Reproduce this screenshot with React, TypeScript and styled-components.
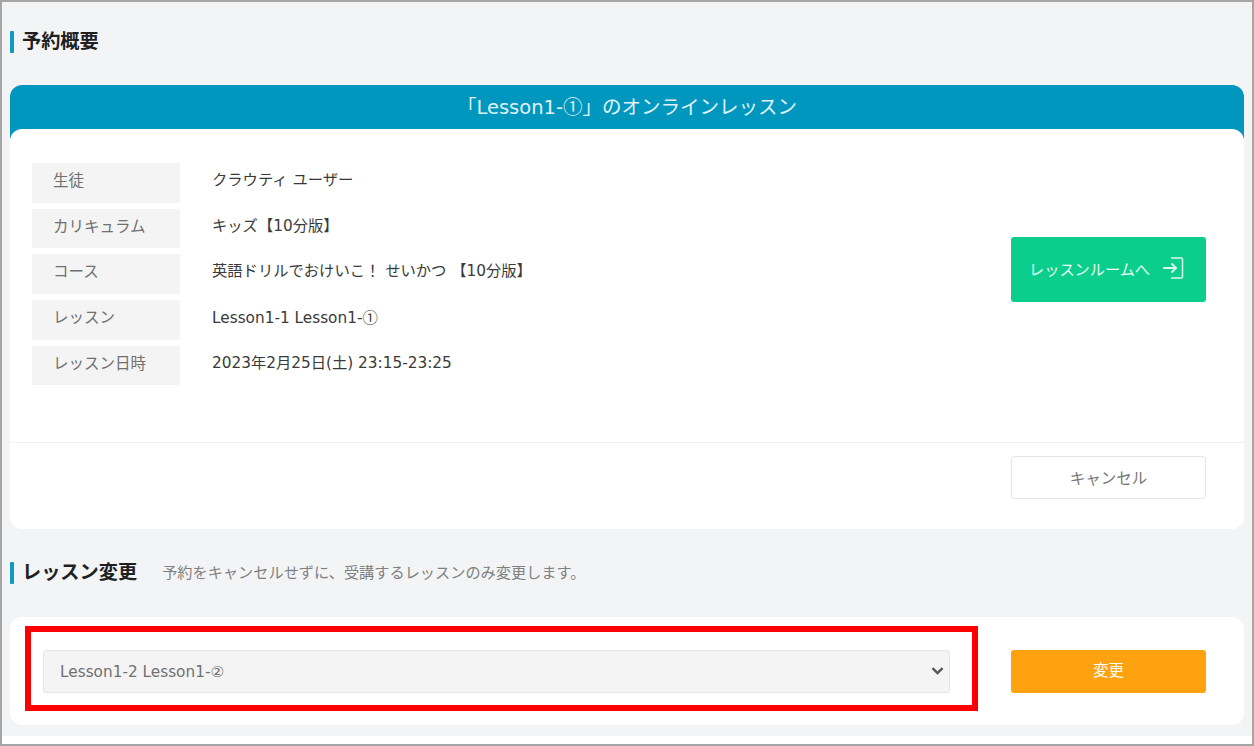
import React from "react";
import styled, { createGlobalStyle } from "styled-components";

const Global = createGlobalStyle`
  html, body { margin: 0; padding: 0; background: #fff; }
  body { font-family: "DejaVu Sans", "Noto Sans CJK JP", sans-serif; color: #333; }
  * { box-sizing: border-box; }
`;

const Frame = styled.div`
  width: 1254px;
  height: 746px;
  border: 2px solid #a6a6a6;
  background: #fff;
  overflow: hidden;
`;

const Page = styled.main`
  height: 734px;
  background: #f3f4f6;
  padding: 23px 8px 0;
  display: flex;
  flex-direction: column;
`;

const Heading = styled.h2`
  margin: 0;
  height: 34px;
  display: flex;
  align-items: center;
  font-size: 19.2px;
  line-height: 22px;
  font-weight: 700;
  color: #1f1f1f;
  &::before {
    content: "";
    width: 4px;
    height: 22px;
    margin-right: 8px;
    border-radius: 1px;
    background: #0f9bc1;
  }
`;

const HeadingNote = styled.span`
  margin-left: 25px;
  font-size: 15.2px;
  font-weight: 400;
  color: #808080;
`;

const Card = styled.section`
  margin-top: 26px;
  border-radius: 12px;
  background: linear-gradient(#0097bf 60px, transparent 60px);
  height: 444px;
  display: flex;
  flex-direction: column;
`;

const CardTitle = styled.div`
  height: 44px;
  padding-bottom: 3px;
  display: flex;
  align-items: center;
  justify-content: center;
  color: #fff;
  font-size: 19.5px;
  opacity: 0.88;
  flex: none;
`;

const Circled = styled.span`
  font-family: "Noto Sans CJK JP", sans-serif;
`;

const CardBody = styled.div`
  flex: 1;
  background: #fff;
  border-radius: 12px;
  display: flex;
  flex-direction: column;
`;

const Summary = styled.div`
  height: 314px;
  padding: 34px 38px 0 22px;
  display: flex;
  justify-content: space-between;
  align-items: flex-start;
  border-bottom: 1px solid #f1f1f1;
`;

const Rows = styled.dl`
  margin: 0;
  display: grid;
  grid-template-columns: 148px 1fr;
  grid-auto-rows: 39.7px;
  row-gap: 6px;
`;

const Label = styled.dt`
  background: #f4f4f4;
  padding: 0 0 4px 21px;
  display: flex;
  align-items: center;
  font-size: 15.5px;
  line-height: 20px;
  color: #707070;
`;

const Value = styled.dd`
  margin: 0;
  padding: 0 0 6px 32px;
  font-size: 15.3px;
  line-height: 20px;
  color: #3a3a3a;
  align-self: center;
`;

const Button = styled.button<{ $bg: string }>`
  width: 195px;
  border: none;
  border-radius: 3px;
  background: ${(p) => p.$bg};
  color: #fff;
  font-family: inherit;
  display: flex;
  align-items: center;
  justify-content: center;
  padding: 0;
`;

const RoomButton = styled(Button)`
  height: 65px;
  margin-top: 74px;
  font-size: 15.2px;
  padding: 0 22px 4px 18px;
  justify-content: space-between;
  white-space: nowrap;
  color: #e8fff6;
`;

const CancelRow = styled.div`
  flex: 1;
  padding: 13px 38px 0 0;
  display: flex;
  justify-content: flex-end;
`;

const CancelButton = styled.button`
  width: 195px;
  height: 43px;
  border: 1px solid #e6e6e6;
  border-radius: 3px;
  background: #fff;
  color: #777;
  font-family: inherit;
  font-size: 15.5px;
  padding: 0 0 2px;
`;

const SecondHeading = styled(Heading)`
  margin-top: 27px;
`;

const ChangeCard = styled.section`
  position: relative;
  margin-top: 27px;
  height: 108px;
  background: #fff;
  border-radius: 12px;
  padding: 33px 38px 0 33px;
  display: flex;
  justify-content: space-between;
  align-items: flex-start;
`;

const SelectWrap = styled.div`
  position: relative;
  width: 907px;
  height: 43px;
`;

const LessonSelect = styled.select`
  appearance: none;
  width: 100%;
  height: 100%;
  background-color: #f4f4f4;
  border: 1px solid #e4e4e4;
  border-radius: 3px;
  color: #707070;
  font-family: inherit;
  font-size: 15.3px;
  padding: 0 12px 0 16px;
`;

const Chevron = styled.svg`
  position: absolute;
  right: 6px;
  top: 17px;
  pointer-events: none;
`;

const ChangeButton = styled(Button)`
  height: 43px;
  font-size: 15.5px;
  padding-bottom: 5px;
`;

const Highlight = styled.div`
  position: absolute;
  left: 15px;
  top: 9px;
  width: 953px;
  height: 85px;
  border: 6px solid #ff0000;
  pointer-events: none;
`;

const rows: [string, React.ReactNode][] = [
  ["生徒", "クラウティ ユーザー"],
  ["カリキュラム", "キッズ【10分版】"],
  ["コース", "英語ドリルでおけいこ！ せいかつ 【10分版】"],
  ["レッスン", <>Lesson1-1 Lesson1-<Circled>①</Circled></>],
  ["レッスン日時", "2023年2月25日(土) 23:15-23:25"],
];

export default function App() {
  return (
    <>
      <Global />
      <Frame>
        <Page>
          <Heading>予約概要</Heading>
          <Card>
            <CardTitle>
              <span>「Lesson1-<Circled>①</Circled>」のオンラインレッスン</span>
            </CardTitle>
            <CardBody>
              <Summary>
                <Rows>
                  {rows.map(([k, v]) => (
                    <React.Fragment key={k}>
                      <Label>{k}</Label>
                      <Value>{v}</Value>
                    </React.Fragment>
                  ))}
                </Rows>
                <RoomButton $bg="#0bce8c">
                  レッスンルームへ
                  <svg width="22" height="24" viewBox="0 0 22 24" fill="none" stroke="#d9f8ec" strokeWidth="1.5">
                    <path d="M9 2h10.5a1 1 0 0 1 1 1v18a1 1 0 0 1-1 1H9" />
                    <path d="M1 12h13M9.5 7.5 14 12l-4.5 4.5" strokeWidth="2" />
                  </svg>
                </RoomButton>
              </Summary>
              <CancelRow>
                <CancelButton>キャンセル</CancelButton>
              </CancelRow>
            </CardBody>
          </Card>
          <SecondHeading>
            レッスン変更
            <HeadingNote>予約をキャンセルせずに、受講するレッスンのみ変更します。</HeadingNote>
          </SecondHeading>
          <ChangeCard>
            <SelectWrap>
              <LessonSelect defaultValue="2">
                <option value="2">Lesson1-2 Lesson1-②</option>
              </LessonSelect>
              <Chevron width="13" height="8" viewBox="0 0 13 8" fill="none" stroke="#555" strokeWidth="2.4">
                <path d="M1.5 1.2 6.5 6l5-4.8" />
              </Chevron>
            </SelectWrap>
            <ChangeButton $bg="#ffa20f">変更</ChangeButton>
            <Highlight />
          </ChangeCard>
        </Page>
      </Frame>
    </>
  );
}
